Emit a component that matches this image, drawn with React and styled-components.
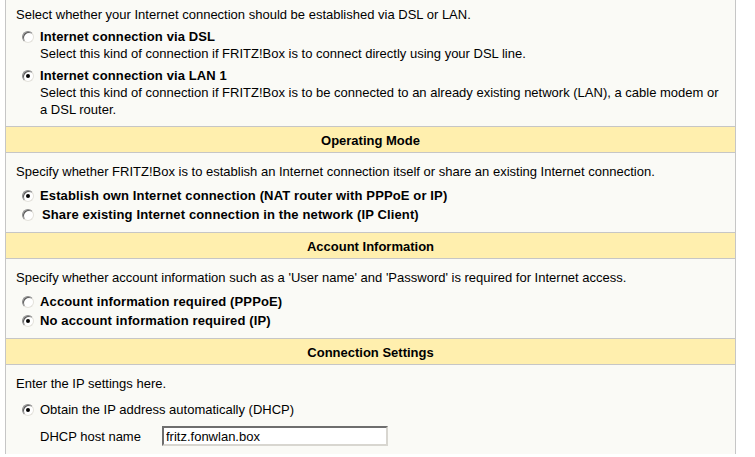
import React from "react";
import styled, { createGlobalStyle } from "styled-components";

const GlobalStyle = createGlobalStyle`
  html, body {
    margin: 0;
    padding: 0;
    background: #FFFFFF;
  }
  body {
    font-family: "Liberation Sans", Arial, sans-serif;
    font-size: 13px;
    color: #000000;
  }
`;

const Panel = styled.div`
  margin-left: 5px;
  width: 729px;
  border-left: 1px solid #C6C6C6;
  border-right: 1px solid #C6C6C6;
  background: #FAFAF6;
`;

const SectionHeader = styled.div`
  height: 25px;
  line-height: 27px;
  overflow: hidden;
  border-top: 1px solid #C6C6C6;
  border-bottom: 1px solid #C6C6C6;
  background: #FFEFAE;
  text-align: center;
  font-weight: bold;
`;

const SectionBody = styled.div`
  padding: ${({ $top }) => $top ?? 10}px 10px 8px 10px;
  display: flex;
  flex-direction: column;
`;

const Intro = styled.div`
  line-height: 17px;
`;

const OptionGroup = styled.div`
  display: grid;
  grid-template-columns: 24px 1fr;
  margin-top: 5px;
  line-height: 17px;
`;

const OptionTitle = styled.div`
  font-weight: bold;
  letter-spacing: 0.12px;
`;

const OptionText = styled.div`
  grid-column: 2;
`;

const RadioList = styled.div`
  display: flex;
  flex-direction: column;
  margin-top: ${({ $gap }) => $gap ?? 6}px;
`;

const RadioRow = styled.label`
  display: flex;
  align-items: center;
  height: 19px;
  font-weight: ${({ $bold }) => ($bold ? "bold" : "normal")};
  letter-spacing: ${({ $bold }) => ($bold ? "0.13px" : "normal")};
`;

const RadioCell = styled.span`
  width: ${({ $wide }) => ($wide ? 26 : 24)}px;
  flex: none;
  display: flex;
  align-items: center;
  align-self: ${({ $top }) => ($top ? "start" : "center")};
  height: 17px;
`;

const Radio = styled.span`
  position: relative;
  box-sizing: border-box;
  width: 12px;
  height: 12px;
  margin-left: 6px;
  border-radius: 50%;
  border: 1px solid;
  border-color: #8A8A8A #E4E2DC #E4E2DC #8A8A8A;
  background: #FFFFFF;
  box-shadow: inset 1px 1px 0 #5A5A5A;

  &::after {
    content: "";
    display: ${({ $checked }) => ($checked ? "block" : "none")};
    position: absolute;
    left: 3px;
    top: 3px;
    width: 4px;
    height: 4px;
    border-radius: 50%;
    background: #000000;
  }
`;

const FieldRow = styled.div`
  display: flex;
  align-items: center;
  margin-top: 7px;
  padding-left: 24px;
`;

const FieldLabel = styled.span`
  width: 122px;
`;

const TextInput = styled.input`
  box-sizing: border-box;
  width: 226px;
  height: 20px;
  padding: 0 2px;
  font-family: "Liberation Sans", Arial, sans-serif;
  font-size: 13px;
  color: #000000;
  background: #FFFFFF;
  border: 2px solid;
  border-color: #6E6E6E #D8D6D0 #D8D6D0 #6E6E6E;
  outline: none;
`;

const Option = ({ checked, title, children }) => (
  <OptionGroup>
    <RadioCell $top>
      <Radio $checked={checked} />
    </RadioCell>
    <OptionTitle>{title}</OptionTitle>
    <OptionText>{children}</OptionText>
  </OptionGroup>
);

const RadioItem = ({ checked, bold, wide, children }) => (
  <RadioRow $bold={bold}>
    <RadioCell $wide={wide}>
      <Radio $checked={checked} />
    </RadioCell>
    {children}
  </RadioRow>
);

const App = () => {
  return (
    <>
      <GlobalStyle />
      <Panel>
        <SectionBody $top={6}>
          <Intro>Select whether your Internet connection should be established via DSL or LAN.</Intro>
          <Option title="Internet connection via DSL">
            Select this kind of connection if FRITZ!Box is to connect directly using your DSL line.
          </Option>
          <Option checked title="Internet connection via LAN 1">
            Select this kind of connection if FRITZ!Box is to be connected to an already existing network (LAN), a cable modem or a DSL router.
          </Option>
        </SectionBody>

        <SectionHeader>Operating Mode</SectionHeader>
        <SectionBody>
          <Intro>Specify whether FRITZ!Box is to establish an Internet connection itself or share an existing Internet connection.</Intro>
          <RadioList>
            <RadioItem checked bold>Establish own Internet connection (NAT router with PPPoE or IP)</RadioItem>
            <RadioItem bold wide>Share existing Internet connection in the network (IP Client)</RadioItem>
          </RadioList>
        </SectionBody>

        <SectionHeader>Account Information</SectionHeader>
        <SectionBody>
          <Intro>Specify whether account information such as a 'User name' and 'Password' is required for Internet access.</Intro>
          <RadioList>
            <RadioItem bold>Account information required (PPPoE)</RadioItem>
            <RadioItem checked bold>No account information required (IP)</RadioItem>
          </RadioList>
        </SectionBody>

        <SectionHeader>Connection Settings</SectionHeader>
        <SectionBody>
          <Intro>Enter the IP settings here.</Intro>
          <RadioList $gap={8}>
            <RadioItem checked>Obtain the IP address automatically (DHCP)</RadioItem>
          </RadioList>
          <FieldRow>
            <FieldLabel>DHCP host name</FieldLabel>
            <TextInput defaultValue="fritz.fonwlan.box" />
          </FieldRow>
        </SectionBody>
      </Panel>
    </>
  );
};

export default App;
